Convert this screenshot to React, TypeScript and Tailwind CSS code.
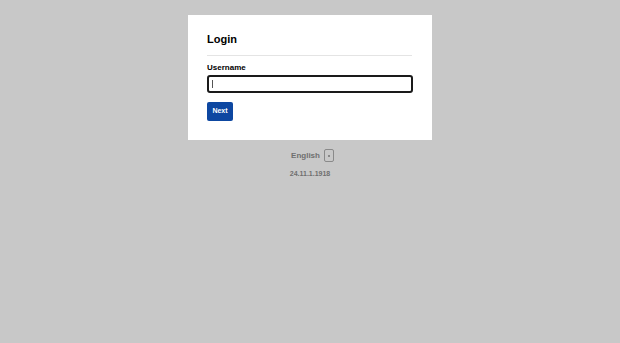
export default function App() {
  return (
    <div
      className="min-h-screen w-full bg-[#c8c8c8] pt-[15px]"
      style={{ fontFamily: '"Liberation Sans", Arial, sans-serif' }}
    >
      <div className="mx-auto w-[244px] bg-white px-[19px] pt-[18px] pb-[19px]">
        <h1 className="text-[11px] font-bold leading-[13px] text-black">Login</h1>
        <div className="mt-[9px] h-px w-[205px] bg-[#e4e4e4]" />
        <label className="mt-[7px] block text-[8px] font-bold leading-[10px] text-black">
          Username
        </label>
        <div className="mt-[2px] flex h-[18px] w-[206px] items-center rounded-[3px] border-2 border-[#1a1a1a] px-[3px]">
          <div className="h-[8px] w-px bg-[#555]" />
        </div>
        <button className="mt-[9px] flex h-[19px] w-[26px] items-center justify-center rounded-[2px] bg-[#0d47a1] text-[7px] font-bold text-white">
          Next
        </button>
      </div>
      <div className="mt-[9px] flex items-center justify-center gap-[4px] pl-[5px]">
        <span className="text-[8px] font-semibold text-[#6f6f6f]">English</span>
        <div className="flex h-[13px] w-[10px] items-center justify-center rounded-[2px] border border-[#8a8a8a]">
          <div className="h-[2px] w-[2px] bg-[#888]" />
        </div>
      </div>
      <div className="mt-[7px] text-center text-[7px] font-semibold text-[#6f6f6f]">24.11.1.1918</div>
    </div>
  );
}
